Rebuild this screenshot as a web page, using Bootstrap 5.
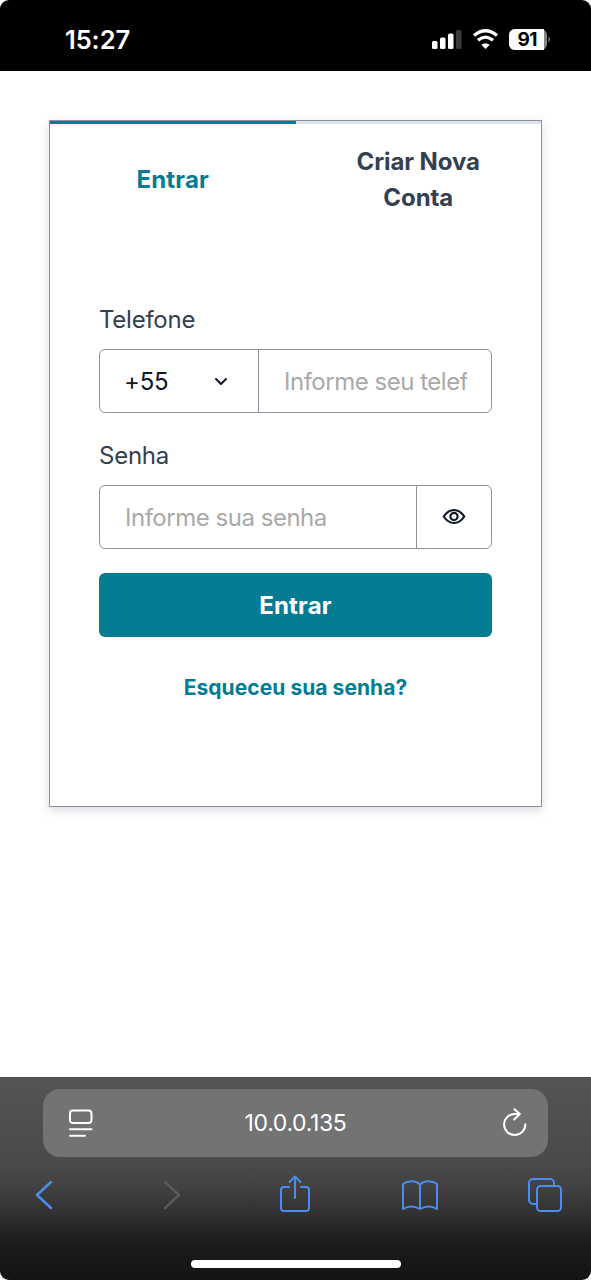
<!DOCTYPE html>
<html lang="pt-BR">
<head>
<meta charset="utf-8">
<meta name="viewport" content="width=device-width, initial-scale=1">
<title>Entrar</title>
<link href="https://cdn.jsdelivr.net/npm/bootstrap@5.3.0/dist/css/bootstrap.min.css" rel="stylesheet">
<style>
  :root { --teal: #057c93; --ink: #334050; --line: #8b929c; }
  html, body { height: 100%; }
  body { font-family: Inter, "Liberation Sans", sans-serif; font-size: 24px; line-height: 36px; color: var(--ink); background: #fff; overflow: hidden; }
  svg { display: block; flex: none; fill: none; stroke-linecap: round; stroke-linejoin: round; }
  .phone { height: 1280px; border-radius: 9px; overflow: hidden; }
  .status { height: 71px; padding: 8px 40px 0 65px; background: #000; color: #fff; }
  .clock { font-size: 25.5px; font-weight: 600; letter-spacing: -.1px; }
  .page-area { padding: 49px 49px 0; }
  .login-card { height: 687px; border: 1.5px solid var(--line); border-radius: 0; box-shadow: 0 3px 9px rgba(52,72,100,.2); }
  .tab { border-top: 3px solid #e0e3e5; height: 114px; font-weight: 700; letter-spacing: -.1px; padding: 0 50px; color: var(--ink); text-decoration: none; }
  .tab.current { border-color: var(--teal); color: var(--teal); letter-spacing: .2px; }
  .login-form { padding: 67px 49px 0; }
  .form-label { margin-bottom: 11px; letter-spacing: -.25px; }
  .field { height: 64px; margin-bottom: 25px; }
  .field.last { margin-bottom: 24px; }
  .field .form-control, .field .btn { border: 1.5px solid var(--line); border-radius: 6px; font-size: 24px; box-shadow: none; background-color: #fff; }
  .field .form-control { padding: 2px 24px 0 25px; letter-spacing: -.48px; }
  .form-control::placeholder { color: #a9a9a9; }
  .field .country { width: 160px; flex: none; padding: 2px 25px 0 24px; color: #101828; letter-spacing: -.2px; }
  .eye { width: 76px; flex: none; }
  .submit { height: 64px; padding: 2px 0 0; background: var(--teal); border: 0; border-radius: 6px; font-size: 24px; font-weight: 700; letter-spacing: .2px; }
  .forgot { color: var(--teal); font-size: 21px; font-weight: 700; letter-spacing: .05px; text-decoration: none; }
  .browser { height: 203px; background: linear-gradient(#545454 0, #4a4a4a 42%, #424242 54%, #303030 68%, #1b1b1b 82%, #131313 100%); padding-top: 12px; }
  .address { height: 68px; margin: 0 43px; padding: 0 20px 0 25px; border-radius: 17px; background: #737373; color: #fff; font-size: 23px; }
  .url { letter-spacing: -.35px; padding-right: 3px; }
  .tools { padding: 17px 26px 0 24px; height: 58px; stroke: #4b8cf0; stroke-width: 2; }
  .tools > span { width: 40px; }
  .home-bar { width: 210px; height: 8px; margin: 45px auto 0; background: #fff; border-radius: 4px; }
</style>
</head>
<body>
<div class="phone d-flex flex-column">
  <header class="status d-flex align-items-center justify-content-between">
    <span class="clock">15:27</span>
    <svg width="120" height="24" viewBox="0 0 120 24">
      <g fill="#fff"><rect x="1" y="13" width="5.5" height="8" rx="1.5"/><rect x="9" y="9.5" width="5.5" height="11.5" rx="1.5"/><rect x="17" y="5.5" width="5.5" height="15.5" rx="1.5"/><rect x="25" y="2" width="5.5" height="19" rx="1.5" fill="#3b3b3b"/>
      <path d="M54.500 21 50.300 16.800Q54.500 13.600 58.700 16.800Z"/></g>
      <path d="M43 7.500Q54.500-2 66 7.500M47 12.300Q54.500 6 62 12.300" stroke="#fff" stroke-width="3.300" stroke-linecap="butt"/>
      <rect x="78" y="1" width="38" height="21" rx="6" fill="#858585"/><path d="M84 1h29v21H84a6 6 0 0 1-6-6V7a6 6 0 0 1 6-6Z" fill="#fff"/><path d="M117.500 8.500q3 3 0 6Z" fill="#858585"/>
      <text x="96.300" y="18" text-anchor="middle" font-size="19" font-weight="700" fill="#000" letter-spacing="-.5">91</text>
    </svg>
  </header>

  <main class="page-area flex-grow-1">
    <section class="card login-card">
      <nav class="row g-0 text-center">
        <a href="#" class="col-6 tab current d-flex align-items-center justify-content-center">Entrar</a>
        <a href="#" class="col-6 tab d-flex align-items-center justify-content-center">Criar Nova Conta</a>
      </nav>
      <form class="login-form">
        <label class="form-label d-block" for="tel">Telefone</label>
        <div class="input-group flex-nowrap field">
          <button type="button" class="btn country d-flex align-items-center justify-content-between">+55
            <svg width="16" height="10" viewBox="0 0 16 10" class="me-1" stroke="#101828" stroke-width="2.100"><path d="M3 2l5 5 5-5"/></svg>
          </button>
          <input id="tel" class="form-control" placeholder="Informe seu telefone">
        </div>
        <label class="form-label d-block" for="pass">Senha</label>
        <div class="input-group flex-nowrap field last">
          <input id="pass" class="form-control" placeholder="Informe sua senha">
          <button type="button" class="btn d-flex align-items-center justify-content-center eye" aria-label="Mostrar senha">
            <svg width="24" height="18" viewBox="0 0 24 18" stroke="#101828" stroke-width="2.200"><path d="M1.700 8.500Q6 2 12 2T22.300 8.500Q18 15 12 15T1.700 8.500Z"/><circle cx="12" cy="8.500" r="3.600"/></svg>
          </button>
        </div>
        <button type="button" class="btn btn-primary submit w-100">Entrar</button>
        <div class="text-center mt-4 pt-2"><a class="forgot" href="#">Esqueceu sua senha?</a></div>
      </form>
    </section>
  </main>

  <footer class="browser">
    <div class="address d-flex align-items-center justify-content-between">
      <svg width="25" height="28" viewBox="0 0 25 28" stroke="#fff" stroke-width="2"><rect x="2" y="1.500" width="21.500" height="12.500" rx="3"/><path d="M2 20.300h21.500M2 26.800h15"/></svg>
      <span class="url">10.0.0.135</span>
      <svg width="27" height="30" viewBox="0 0 27 30" stroke="#fff" stroke-width="2"><path d="M18.500 5.900H14A10.600 10.600 0 1 0 24.300 16.300M13.500 1.200l5.300 4.900-5.700 5.400"/></svg>
    </div>
    <div class="tools d-flex justify-content-between">
      <span class="d-flex justify-content-center"><svg width="18" height="40" viewBox="0 0 18 40"><path d="M16 8 2 21l14 13" stroke-width="2.500"/></svg></span>
      <span class="d-flex justify-content-center ps-2"><svg width="18" height="40" viewBox="0 0 18 40"><path d="M1 8l14 13L1 34" stroke="#5a5a5a" stroke-width="2.500"/></svg></span>
      <span class="d-flex justify-content-center"><svg width="32" height="40" viewBox="0 0 32 40"><path d="M10 13H5a3 3 0 0 0-3 3v18a3 3 0 0 0 3 3h22a3 3 0 0 0 3-3V16a3 3 0 0 0-3-3h-5M16 24V3M10.500 8 16 2.500 21.500 8"/></svg></span>
      <span class="d-flex justify-content-center"><svg width="38" height="40" viewBox="0 0 38 40"><path d="M19 10.500C15 6.500 7 6 2 10v25q8-5 17 0 9-5 17 0V10C31 6 23 6.500 19 10.500v24.500"/></svg></span>
      <span class="d-flex justify-content-center"><svg width="36" height="40" viewBox="0 0 36 40"><path d="M9 30H6a4 4 0 0 1-4-4V9a4 4 0 0 1 4-4h17a4 4 0 0 1 4 4v3"/><rect x="10" y="12" width="24" height="25" rx="3.500"/></svg></span>
    </div>
    <div class="home-bar"></div>
  </footer>
</div>
<script src="https://cdn.jsdelivr.net/npm/bootstrap@5.3.0/dist/js/bootstrap.bundle.min.js"></script>
</body>
</html>
